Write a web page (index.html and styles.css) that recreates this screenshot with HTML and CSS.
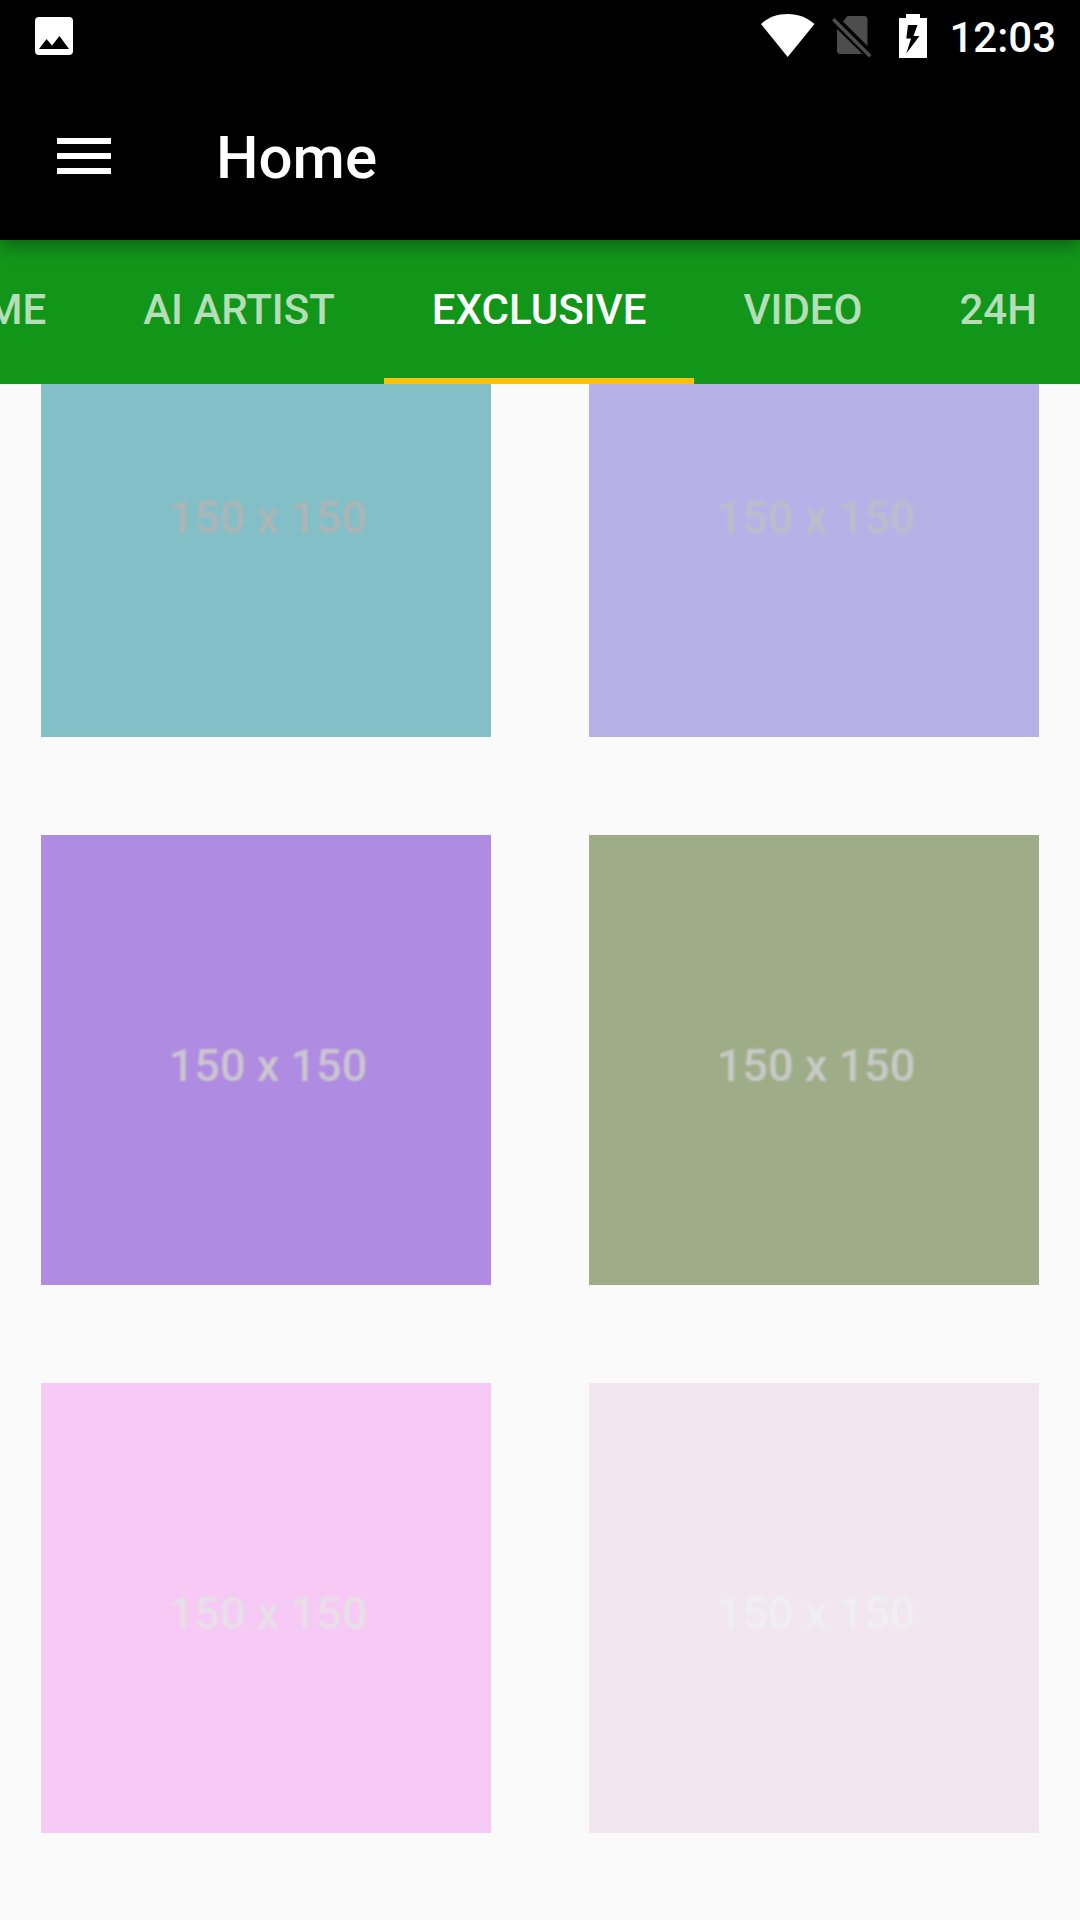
FILE: index.html
```html
<!DOCTYPE html>
<html lang="en">
<head>
<meta charset="utf-8">
<meta name="viewport" content="width=device-width, initial-scale=1">
<title>Home</title>
<link rel="stylesheet" href="styles.css">
</head>
<body>
<header class="header">
  <div class="status">
    <svg class="status-photo" width="38" height="38" viewBox="0 0 38 38" aria-hidden="true"><path fill="#fff" fill-rule="evenodd" d="M4 0h30a4 4 0 0 1 4 4v30a4 4 0 0 1-4 4H4a4 4 0 0 1-4-4V4a4 4 0 0 1 4-4zM4 32h30L24.500 19l-7.500 9.500-5.500-6.500z"/></svg>
    <svg class="status-wifi" width="54" height="44" viewBox="0 0 54 44" aria-hidden="true"><path fill="#fff" d="M0 10C7 3.500 16 0 26.700 0S46 3.500 53.500 10L26.700 43z"/></svg>
    <svg class="status-sim" width="40" height="44" viewBox="0 0 40 44" aria-hidden="true"><path fill="#4d4d4d" d="M15.500 2H32a3.500 3.500 0 0 1 3.500 3.500V32L11 7.500zM5 15l25.500 25H8.500A3.500 3.500 0 0 1 5 36.500zM2.500 4L0 6.500 37 43.500l2.500-2.500z"/></svg>
    <svg class="status-battery" width="28" height="44" viewBox="0 0 28 44" aria-hidden="true"><path fill="#fff" fill-rule="evenodd" d="M7 0h14v4h7v40H0V4h7zM9 11L7.300 24.500h4.700L7.300 39.500 20.500 22h-6L18.500 11z"/></svg>
    <time class="clock">12:03</time>
  </div>
  <div class="toolbar">
    <button class="menu" type="button" aria-label="Open menu"><svg width="72" height="72" viewBox="0 0 24 24" aria-hidden="true"><path fill="#fff" d="M3 18h18v-2H3zm0-5h18v-2H3zm0-7v2h18V6z"/></svg></button>
    <h1 class="title">Home</h1>
  </div>
</header>
<nav class="tabs" aria-label="Sections">
  <div class="tabs-track">
    <a class="tab" href="#home">HOME</a>
    <a class="tab" href="#ai-artist">AI ARTIST</a>
    <a class="tab tab-active" href="#exclusive" aria-current="page">EXCLUSIVE</a>
    <a class="tab" href="#video">VIDEO</a>
    <a class="tab" href="#24h">24H</a>
  </div>
</nav>
<main class="content">
  <div class="grid">
    <div class="tile tile-teal"><span class="size">150 x 150</span></div>
    <div class="tile tile-lavender"><span class="size">150 x 150</span></div>
    <div class="tile tile-purple"><span class="size">150 x 150</span></div>
    <div class="tile tile-olive"><span class="size">150 x 150</span></div>
    <div class="tile tile-pink"><span class="size">150 x 150</span></div>
    <div class="tile tile-blush"><span class="size">150 x 150</span></div>
  </div>
</main>
</body>
</html>
```

FILE: styles.css
```css
* {
  box-sizing: border-box;
}

body {
  margin: 0;
  background: #fafafa;
  font-family: Roboto, "Liberation Sans", sans-serif;
}

.header {
  position: relative;
  z-index: 1;
  background: #000;
  color: #fff;
  box-shadow: 0 4px 18px rgba(0, 0, 0, 0.4);
}

.status {
  display: flex;
  align-items: center;
  height: 72px;
  padding: 0 24px 0 35px;
}

.status svg {
  display: block;
}

.status-wifi {
  margin-left: auto;
}

.status-sim {
  margin-left: 17px;
}

.status-battery {
  margin-left: 27px;
}

.clock {
  margin-left: 22px;
  padding-top: 4px;
  font-size: 42px;
  font-weight: 500;
  line-height: 48px;
}

.toolbar {
  display: flex;
  align-items: center;
  gap: 96px;
  height: 168px;
  padding: 0 48px;
}

.menu {
  padding: 0;
  border: 0;
  background: none;
}

.menu svg {
  display: block;
}

.title {
  margin: 0;
  padding-top: 4px;
  font-size: 60px;
  font-weight: 500;
  line-height: 72px;
}

.tabs {
  overflow: hidden;
  background: #12961a;
}

/* Scrolled so that the active tab is centred. */
.tabs-track {
  display: flex;
  gap: 1px;
  margin-left: -121px;
}

.tab {
  flex: none;
  height: 144px;
  padding: 0 48px;
  border-bottom: 6px solid transparent;
  color: rgba(255, 255, 255, 0.7);
  font-size: 42px;
  font-weight: 500;
  line-height: 140px;
  text-decoration: none;
}

.tab-active {
  border-bottom-color: #ffc107;
  color: #fff;
}

.content {
  overflow: hidden;
}

/* The first row is partly scrolled under the tabs. */
.grid {
  display: grid;
  grid-template-columns: 1fr 1fr;
  gap: 98px;
  margin-top: -97px;
  padding: 0 41px 87px;
}

.tile {
  display: flex;
  align-items: center;
  justify-content: center;
  aspect-ratio: 1;
  padding: 12px 0 0 4px;
  font-size: 45px;
  font-weight: 500;
  line-height: 56px;
}

.size {
  filter: blur(1px);
}

.tile-teal {
  background: #83bfc6;
  color: #adb5b7;
}

.tile-lavender {
  background: #b6b2e7;
  color: #bdbccb;
}

.tile-purple {
  background: #af8be1;
  color: #cbc6d0;
}

.tile-olive {
  background: #9fac88;
  color: #c8cac6;
}

.tile-pink {
  background: #f6caf5;
  color: #e8dfe8;
}

.tile-blush {
  background: #f2e7f0;
  color: #f0eff2;
}
```
